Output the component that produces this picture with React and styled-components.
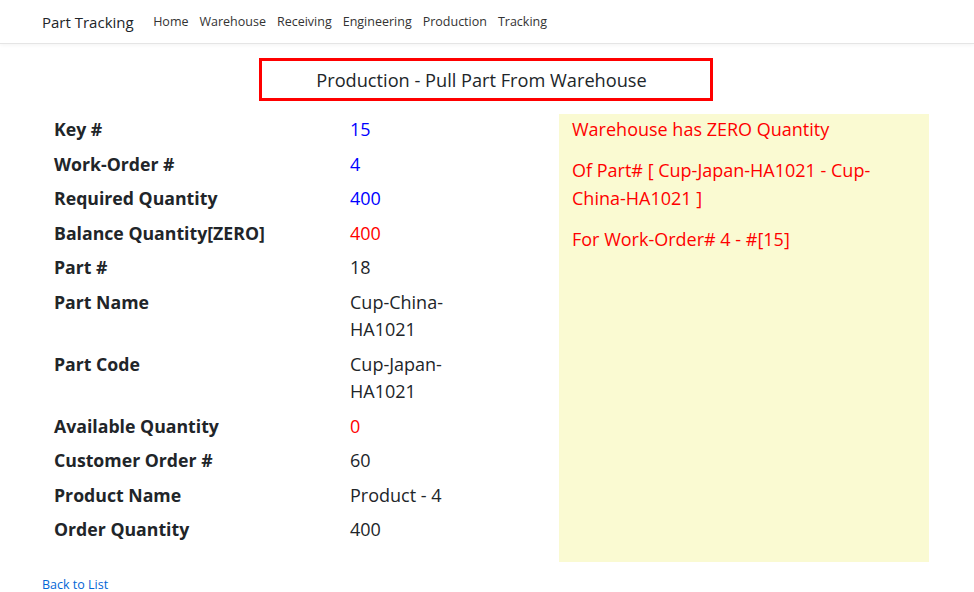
import React from 'react';
import styled, { createGlobalStyle } from 'styled-components';

const GlobalStyle = createGlobalStyle`
  body {
    margin: 0;
    background: #fff;
    font-family: 'Open Sans', 'Noto Sans', sans-serif;
    color: #212529;
  }
`;

const Navbar = styled.header`
  height: 44px;
  display: flex;
  align-items: center;
  padding: 0 42px;
  border-bottom: 1px solid #e5e5e5;
  box-shadow: 0 1px 4px rgba(0, 0, 0, 0.05);
  box-sizing: border-box;
`;

const Brand = styled.a`
  font-size: 15px;
  color: #212529;
  margin-right: 14px;
  text-decoration: none;
`;

const NavLink = styled.a`
  font-size: 12.5px;
  color: #333;
  padding: 0 5.5px;
  text-decoration: none;
`;

const Main = styled.main`
  padding: 14px 42px 0;
`;

const TitleBox = styled.h2`
  width: 454px;
  height: 43px;
  margin: 0 auto;
  padding-right: 9px;
  border: 3px solid #ff0000;
  box-sizing: border-box;
  display: flex;
  align-items: center;
  justify-content: center;
  font-size: 18.2px;
  font-weight: 400;
  color: #212529;
  position: relative;
  left: -1px;
`;

const Content = styled.div`
  display: flex;
  margin-top: 13px;
  padding-left: 12px;
`;

const Details = styled.dl`
  flex: 0 0 505px;
  margin: 2px 0 11px;
`;

const Row = styled.div`
  display: grid;
  grid-template-columns: 296px 125px;
  line-height: 27.5px;
  margin-bottom: 7px;
`;

const Term = styled.dt`
  font-size: 17.7px;
  font-weight: 700;
  color: #212529;
`;

const Value = styled.dd`
  margin: 0;
  font-size: 18px;
  color: ${({ $tone }) =>
    $tone === 'blue' ? '#0000ff' : $tone === 'red' ? '#ff0000' : '#212529'};
`;

const Alert = styled.aside`
  flex: 0 0 370px;
  background: #fafad2;
  padding: 1px 13px;
  box-sizing: border-box;
  color: #ff0000;
  font-size: 18px;
  line-height: 28px;
  p {
    margin: 0 0 13px;
  }
`;

const BackLink = styled.a`
  display: inline-block;
  margin-top: 14px;
  font-size: 12.5px;
  color: #0366d6;
  text-decoration: none;
`;

const rows = [
  ['Key #', '15', 'blue'],
  ['Work-Order #', '4', 'blue'],
  ['Required Quantity', '400', 'blue'],
  ['Balance Quantity[ZERO]', '400', 'red'],
  ['Part #', '18'],
  ['Part Name', 'Cup-China-HA1021'],
  ['Part Code', 'Cup-Japan-HA1021'],
  ['Available Quantity', '0', 'red'],
  ['Customer Order #', '60'],
  ['Product Name', 'Product - 4'],
  ['Order Quantity', '400'],
];

export default function App() {
  return (
    <>
      <GlobalStyle />
      <Navbar>
        <Brand href="#">Part Tracking</Brand>
        {['Home', 'Warehouse', 'Receiving', 'Engineering', 'Production', 'Tracking'].map((l) => (
          <NavLink key={l} href="#">{l}</NavLink>
        ))}
      </Navbar>
      <Main>
        <TitleBox>Production - Pull Part From Warehouse</TitleBox>
        <Content>
          <Details>
            {rows.map(([label, value, tone]) => (
              <Row key={label}>
                <Term>{label}</Term>
                <Value $tone={tone}>{value}</Value>
              </Row>
            ))}
          </Details>
          <Alert>
            <p>Warehouse has ZERO Quantity</p>
            <p>Of Part# [ Cup-Japan-HA1021 - Cup-China-HA1021 ]</p>
            <p>For Work-Order# 4 - #[15]</p>
          </Alert>
        </Content>
        <BackLink href="#">Back to List</BackLink>
      </Main>
    </>
  );
}
